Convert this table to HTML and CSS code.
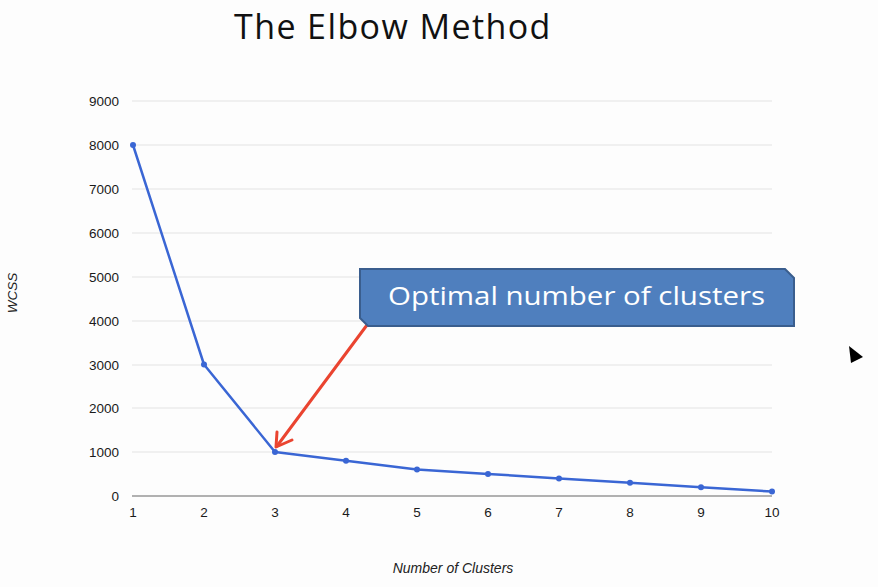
FILE: index.html
```html
<!DOCTYPE html>
<html>
<head>
<meta charset="utf-8">
<link rel="stylesheet" href="styles.css">
</head>
<body>
<div class="page">
  <h1 class="title">The Elbow Method</h1>
  <svg class="chart" viewBox="0 46 878 541" width="878" height="541">
    <g class="grid">
      <line x1="132" y1="101" x2="772" y2="101"/>
      <line x1="132" y1="145" x2="772" y2="145"/>
      <line x1="132" y1="189" x2="772" y2="189"/>
      <line x1="132" y1="233" x2="772" y2="233"/>
      <line x1="132" y1="277" x2="772" y2="277"/>
      <line x1="132" y1="321" x2="772" y2="321"/>
      <line x1="132" y1="365" x2="772" y2="365"/>
      <line x1="132" y1="408" x2="772" y2="408"/>
      <line x1="132" y1="452" x2="772" y2="452"/>
    </g>
    <line class="axis" x1="132" y1="496" x2="772" y2="496"/>
    <g class="ylabels">
      <text x="119" y="106">9000</text>
      <text x="119" y="150">8000</text>
      <text x="119" y="194">7000</text>
      <text x="119" y="238">6000</text>
      <text x="119" y="282">5000</text>
      <text x="119" y="326">4000</text>
      <text x="119" y="370">3000</text>
      <text x="119" y="413">2000</text>
      <text x="119" y="457">1000</text>
      <text x="119" y="501">0</text>
    </g>
    <g class="xlabels">
      <text x="133" y="517">1</text>
      <text x="204" y="517">2</text>
      <text x="275" y="517">3</text>
      <text x="346" y="517">4</text>
      <text x="417" y="517">5</text>
      <text x="488" y="517">6</text>
      <text x="559" y="517">7</text>
      <text x="630" y="517">8</text>
      <text x="701" y="517">9</text>
      <text x="772" y="517">10</text>
    </g>
    <text class="ytitle" transform="translate(17 293) rotate(-90)">WCSS</text>
    <text class="xtitle" x="453" y="573">Number of Clusters</text>
    <polyline class="series" points="133,145 204,364.5 275,452 346,460.8 417,469.6 488,474 559,478.4 630,482.8 701,487.2 772,491.6"/>
    <g class="dots">
      <circle cx="133" cy="145" r="3"/>
      <circle cx="204" cy="364.5" r="3"/>
      <circle cx="275" cy="452" r="3"/>
      <circle cx="346" cy="460.8" r="3"/>
      <circle cx="417" cy="469.6" r="3"/>
      <circle cx="488" cy="474" r="3"/>
      <circle cx="559" cy="478.4" r="3"/>
      <circle cx="630" cy="482.8" r="3"/>
      <circle cx="701" cy="487.2" r="3"/>
      <circle cx="772" cy="491.6" r="3"/>
    </g>
    <line class="arrow" x1="367" y1="325" x2="277" y2="446"/>
    <polyline class="arrow" points="277,432 276,447 292,440"/>
    <polygon class="callout" points="360,269 785,269 794,278 794,326 368,326 360,318"/>
    <text class="callout-text" x="388" y="305" textLength="377" lengthAdjust="spacingAndGlyphs">Optimal number of clusters</text>
  </svg>
  <svg class="cursor" viewBox="0 0 16 18" width="16" height="18">
    <polygon points="1,0 15,11 3,17"/>
  </svg>
</div>
</body>
</html>
```
FILE: styles.css
```css
html, body {
  margin: 0;
  padding: 0;
  background: #fdfdfd;
}
.page {
  position: relative;
  width: 878px;
  height: 587px;
  overflow: hidden;
  display: flex;
  flex-direction: column;
}
.title {
  margin: 0;
  height: 46px;
  box-sizing: border-box;
  padding: 6px 0 0 234px;
  font-family: "Open Sans", "DejaVu Sans", sans-serif;
  font-weight: 400;
  font-size: 34px;
  line-height: 40px;
  color: #111;
  letter-spacing: 1.4px;
}
.chart {
  display: block;
}
.grid line {
  stroke: #e3e3e3;
  stroke-width: 1;
}
.axis {
  stroke: #666;
  stroke-width: 1.2;
}
.ylabels text {
  font-family: "Liberation Sans", Arial, sans-serif;
  font-size: 13.5px;
  fill: #1a1a1a;
  text-anchor: end;
}
.xlabels text {
  font-family: "Liberation Sans", Arial, sans-serif;
  font-size: 13.5px;
  fill: #1a1a1a;
  text-anchor: middle;
}
.ytitle, .xtitle {
  font-family: "Liberation Sans", Arial, sans-serif;
  font-style: italic;
  font-size: 14px;
  fill: #222;
  text-anchor: middle;
}
.ytitle {
  font-size: 13.5px;
}
.series {
  fill: none;
  stroke: #3a66d4;
  stroke-width: 2.5;
  stroke-linejoin: round;
}
.dots circle {
  fill: #3a66d4;
}
.arrow {
  fill: none;
  stroke: #ea4430;
  stroke-width: 3;
  stroke-linecap: round;
  stroke-linejoin: round;
}
.callout {
  fill: #4f7fbe;
  stroke: #3a5e8e;
  stroke-width: 2;
}
.callout-text {
  font-family: "Open Sans", "DejaVu Sans", sans-serif;
  font-size: 25px;
  fill: #ffffff;
}
.cursor {
  position: absolute;
  left: 848px;
  top: 346px;
}
.cursor polygon {
  fill: #000;
}
```
